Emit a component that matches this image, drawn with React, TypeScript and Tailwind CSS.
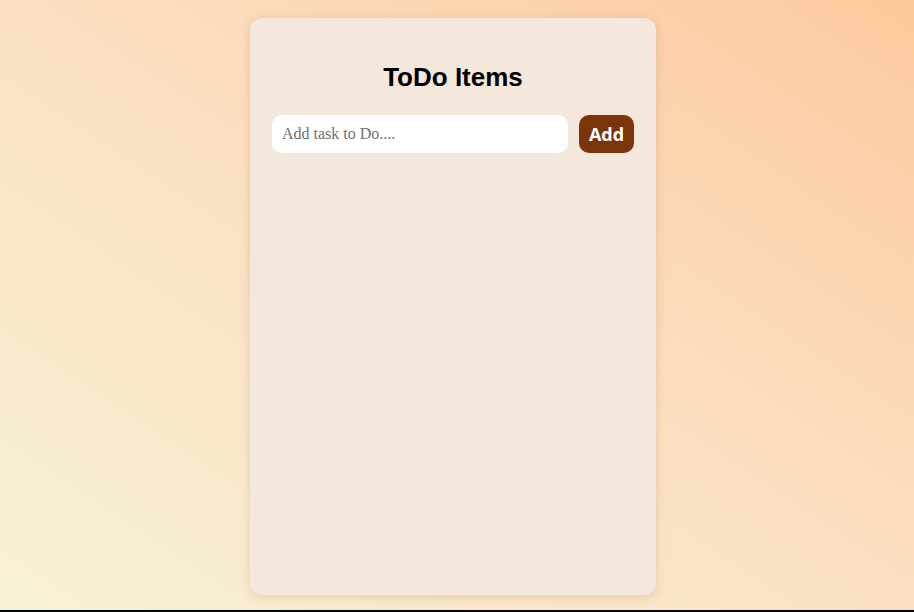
export default function App() {
  return (
    <div className="w-[914px] h-[612px] flex flex-col overflow-hidden">
      <div className="h-[610px] flex justify-center bg-[linear-gradient(to_top_right,#f7f2d4_0%,#fbe0c2_50%,#fdc99d_100%)]">
        <div className="mt-[18px] mr-[8px] w-[406px] h-[577px] rounded-[12px] bg-[#f4e7db] shadow-[0_2px_10px_rgba(160,110,60,0.25)] px-[22px] pt-[42px]">
          <h1 className="text-center text-[26px] font-bold text-black leading-[34px] font-['Liberation_Sans',Arial,sans-serif]">
            ToDo Items
          </h1>
          <div className="mt-[21px] flex items-center gap-[11px]">
            <input
              placeholder="Add task to Do...."
              className="h-[38px] flex-1 rounded-[10px] bg-white px-[10px] text-[16px] font-['Liberation_Serif','Times_New_Roman',serif] text-black placeholder:text-[#707070] outline-none"
            />
            <button className="h-[38px] w-[55px] rounded-[10px] bg-[#7c350b] text-white text-[18px] font-bold font-['Open_Sans',sans-serif]">
              Add
            </button>
          </div>
        </div>
      </div>
      <div className="h-[2px] bg-black" />
    </div>
  );
}
